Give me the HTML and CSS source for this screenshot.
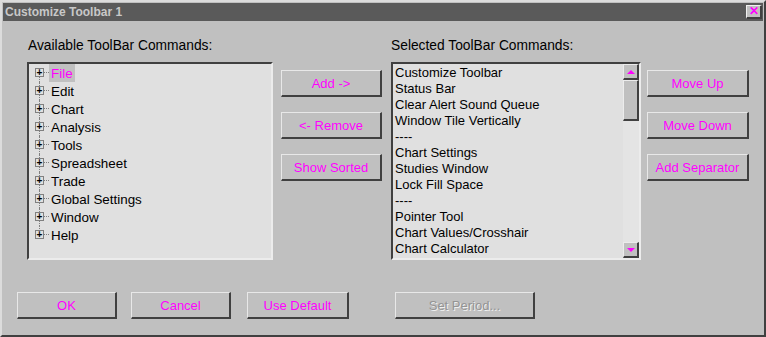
FILE: index.html
```html
<!DOCTYPE html>
<html lang="en">
<head>
    <meta charset="UTF-8">
    <title>Customize Toolbar 1</title>
    <link rel="stylesheet" href="styles.css">
</head>
<body>
    <div class="window">
        <div class="titlebar">
            <span class="title">Customize Toolbar 1</span>
            <span class="close">&#x2715;</span>
        </div>
        <div class="main">
            <div class="col-list left">
                <div class="label">Available ToolBar Commands:</div>
                <div class="listbox tree">
                    <div class="node first"><span class="twig"><span class="plus">+</span></span><span class="text selected">File</span></div>
                    <div class="node"><span class="twig"><span class="plus">+</span></span><span class="text">Edit</span></div>
                    <div class="node"><span class="twig"><span class="plus">+</span></span><span class="text">Chart</span></div>
                    <div class="node"><span class="twig"><span class="plus">+</span></span><span class="text">Analysis</span></div>
                    <div class="node"><span class="twig"><span class="plus">+</span></span><span class="text">Tools</span></div>
                    <div class="node"><span class="twig"><span class="plus">+</span></span><span class="text">Spreadsheet</span></div>
                    <div class="node"><span class="twig"><span class="plus">+</span></span><span class="text">Trade</span></div>
                    <div class="node"><span class="twig"><span class="plus">+</span></span><span class="text">Global Settings</span></div>
                    <div class="node"><span class="twig"><span class="plus">+</span></span><span class="text">Window</span></div>
                    <div class="node last"><span class="twig"><span class="plus">+</span></span><span class="text">Help</span></div>
                </div>
            </div>
            <div class="buttons mid">
                <button class="btn">Add -&gt;</button>
                <button class="btn">&lt;- Remove</button>
                <button class="btn">Show Sorted</button>
            </div>
            <div class="col-list right">
                <div class="label">Selected ToolBar Commands:</div>
                <div class="listbox selected-list">
                    <div class="items">
                        <div class="item">Customize Toolbar</div>
                        <div class="item">Status Bar</div>
                        <div class="item">Clear Alert Sound Queue</div>
                        <div class="item">Window Tile Vertically</div>
                        <div class="item">----</div>
                        <div class="item">Chart Settings</div>
                        <div class="item">Studies Window</div>
                        <div class="item">Lock Fill Space</div>
                        <div class="item">----</div>
                        <div class="item">Pointer Tool</div>
                        <div class="item">Chart Values/Crosshair</div>
                        <div class="item">Chart Calculator</div>
                    </div>
                    <div class="scrollbar">
                        <span class="arrow up"></span>
                        <span class="thumb"></span>
                        <span class="track"></span>
                        <span class="arrow down"></span>
                    </div>
                </div>
            </div>
            <div class="buttons side">
                <button class="btn">Move Up</button>
                <button class="btn">Move Down</button>
                <button class="btn">Add Separator</button>
            </div>
        </div>
        <div class="footer">
            <button class="btn ok">OK</button>
            <button class="btn cancel">Cancel</button>
            <button class="btn default">Use Default</button>
            <button class="btn period" disabled>Set Period...</button>
        </div>
    </div>
</body>
</html>
```

FILE: styles.css
```css
body {
    margin: 0;
    font-family: "Liberation Sans", Arial, sans-serif;
    font-size: 13px;
    background: #c0c0c0;
}
.window {
    width: 766px;
    height: 337px;
    box-sizing: border-box;
    background: #c0c0c0;
    border-top: 2px solid #dcdcdc;
    border-left: 2px solid #dcdcdc;
    border-right: 2px solid #404040;
    border-bottom: 2px solid #404040;
    padding: 1px;
}
.titlebar {
    height: 18px;
    background: #5a5a5a;
    display: flex;
    align-items: center;
    justify-content: space-between;
    padding: 0 1px 0 2px;
}
.title {
    color: #c8c8c8;
    font-weight: bold;
    font-size: 12px;
}
.close {
    width: 13px;
    height: 11px;
    box-sizing: content-box;
    background: #c0c0c0;
    border-top: 1px solid #f0f0f0;
    border-left: 1px solid #f0f0f0;
    border-right: 2px solid #404040;
    border-bottom: 2px solid #404040;
    color: #ff00ff;
    font-size: 12px;
    font-weight: bold;
    line-height: 11px;
    text-align: center;
}
.main {
    display: flex;
    padding: 17px 0 0 24px;
}
.label {
    height: 24px;
    line-height: 15px;
    font-size: 13.8px;
}
.left .label {
    padding-left: 1px;
}
.listbox {
    box-sizing: border-box;
    height: 198px;
    background: #e0e0e0;
    border-top: 2px solid #404040;
    border-left: 2px solid #404040;
    border-right: 2px solid #ececec;
    border-bottom: 2px solid #ececec;
}
.tree {
    width: 246px;
    padding: 0 0 0 6px;
    font-size: 13.4px;
}
.node {
    display: flex;
    align-items: center;
    height: 18px;
}
.twig {
    position: relative;
    width: 14px;
    height: 18px;
    flex: none;
}
.twig::before {
    content: "";
    position: absolute;
    left: 4px;
    top: 0;
    bottom: 0;
    border-left: 1px dotted #808080;
}
.node.first .twig::before {
    top: 9px;
}
.node.last .twig::before {
    bottom: 9px;
}
.twig::after {
    content: "";
    position: absolute;
    left: 9px;
    top: 8px;
    width: 5px;
    border-top: 1px dotted #808080;
}
.plus {
    position: absolute;
    left: 0;
    top: 4px;
    width: 7px;
    height: 7px;
    border: 1px solid #808080;
    background: #e0e0e0;
    color: #000;
    font-size: 10px;
    font-weight: bold;
    line-height: 7px;
    text-align: center;
    z-index: 1;
}
.text {
    padding: 0 2px;
    height: 18px;
    line-height: 19px;
}
.text.selected {
    background: #c0c0c0;
    color: #ff00ff;
}
.buttons {
    display: flex;
    flex-direction: column;
    gap: 15px;
    padding-top: 32px;
}
.mid {
    margin: 0 9px 0 8px;
}
.mid .btn {
    width: 101px;
}
.side {
    margin-left: 6px;
}
.side .btn {
    width: 102px;
}
.btn {
    box-sizing: border-box;
    height: 27px;
    background: #c0c0c0;
    border-top: 1px solid #e8e8e8;
    border-left: 1px solid #e8e8e8;
    border-right: 2px solid #404040;
    border-bottom: 2px solid #404040;
    color: #ff00ff;
    font-family: "Liberation Sans", Arial, sans-serif;
    font-size: 13px;
    padding: 0;
}
.selected-list {
    width: 250px;
    display: flex;
}
.items {
    flex: 1;
    padding: 1px 0 0 2px;
}
.item {
    height: 16px;
    line-height: 16px;
}
.scrollbar {
    width: 16px;
    display: flex;
    flex-direction: column;
    background: #e4e4e4;
}
.arrow, .thumb {
    box-sizing: border-box;
    width: 16px;
    background: #c0c0c0;
    border-top: 1px solid #ececec;
    border-left: 1px solid #ececec;
    border-right: 2px solid #404040;
    border-bottom: 2px solid #404040;
    display: flex;
    align-items: center;
    justify-content: center;
}
.arrow {
    height: 16px;
}
.thumb {
    height: 41px;
}
.track {
    flex: 1;
}
.arrow::after {
    content: "";
    border-left: 4px solid transparent;
    border-right: 4px solid transparent;
}
.arrow.up::after {
    border-bottom: 4px solid #ff00ff;
}
.arrow.down::after {
    border-top: 4px solid #ff00ff;
}
.footer {
    display: flex;
    padding: 32px 0 0 14px;
}
.ok, .cancel {
    width: 100px;
}
.cancel {
    margin-left: 14px;
}
.default {
    width: 102px;
    margin-left: 16px;
}
.period {
    width: 140px;
    margin-left: 46px;
    color: #949494;
    text-shadow: 1px 1px 0 #f0f0f0;
}
```
